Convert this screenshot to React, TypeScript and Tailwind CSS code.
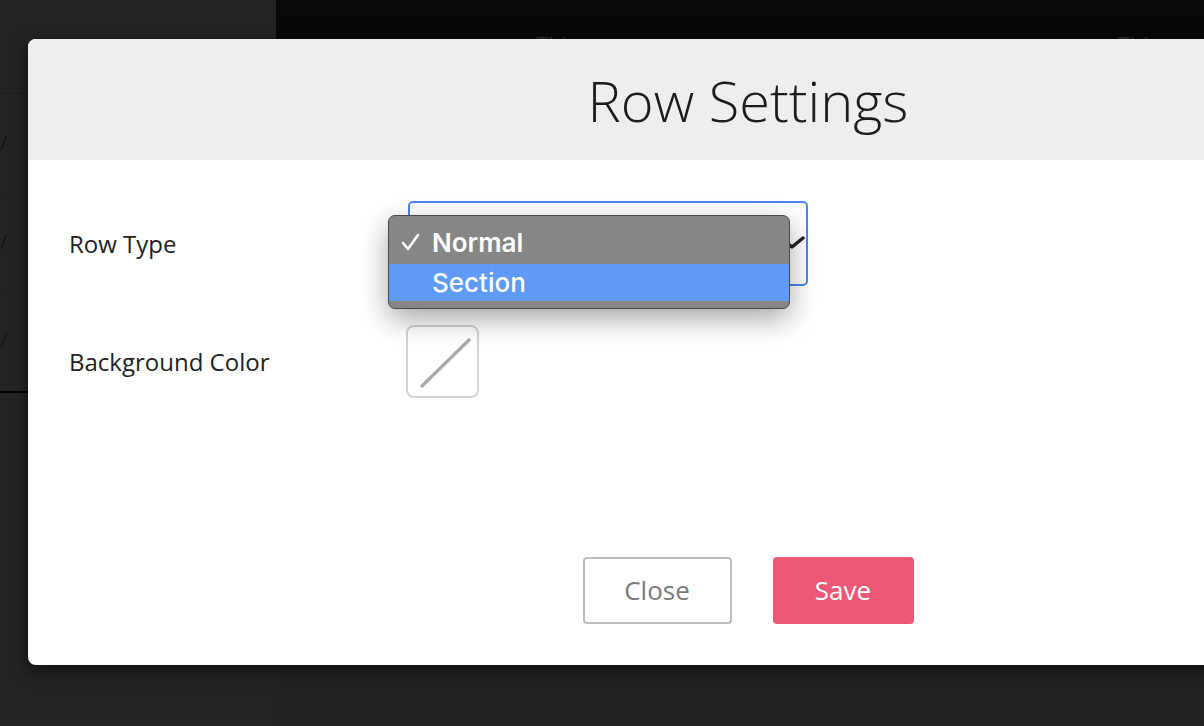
import React from "react";

const sans = { fontFamily: '"Open Sans", "Liberation Sans", sans-serif' };

function Sidebar() {
  return (
    <div className="flex w-[276px] shrink-0 flex-col bg-[#242424]">
      <div className="h-[94px] border-b border-[#1d1d1d]" />
      {[0, 1, 2].map((i) => (
        <div key={i} className="flex h-[99px] items-center border-b border-[#222] text-[20px] text-[#141414]" style={sans}>
          <span>/</span>
        </div>
      ))}
      <div className="h-[2px] bg-black" />
    </div>
  );
}

function TopBar() {
  return (
    <div className="flex h-[39px] items-end bg-[#080808] text-[22px] text-[#2c2c2c]" style={sans}>
      <span className="ml-[260px] translate-y-[22px]">Title</span>
      <span className="ml-[538px] translate-y-[22px]">Title</span>
    </div>
  );
}

function RowTypeSelect() {
  return (
    <div className="relative h-[85px] w-[400px] rounded-[5px] border-2 border-[#4d84f1] bg-white">
      <svg className="absolute left-[369px] top-[33px]" width="26" height="14" viewBox="0 0 26 14">
        <path d="M2 2 L13 11 L24 2" fill="none" stroke="#222" strokeWidth="3.5" strokeLinecap="round" strokeLinejoin="round" />
      </svg>
      {/* native popup menu */}
      <div className="absolute -left-[22px] top-[12px] w-[402px] overflow-hidden rounded-[7px] border border-[#4a4a4a] bg-[#868686] pt-[4px] pb-[7px] shadow-[0_10px_28px_rgba(0,0,0,0.35)]">
        <div className="flex h-[44px] items-center text-[26px] font-semibold text-white" style={{ fontFamily: "Inter, sans-serif" }}>
          <span className="flex w-[43px] justify-start pl-[12px]">
            <svg width="19" height="18" viewBox="0 0 19 18">
              <path d="M2 10 L7 16 L17 2" fill="none" stroke="#fff" strokeWidth="2.6" strokeLinecap="round" strokeLinejoin="round" />
            </svg>
          </span>
          <span>Normal</span>
        </div>
        <div className="flex h-[37px] items-center bg-[#5e9af6] pl-[43px] text-[26px] font-medium text-white" style={{ fontFamily: "Inter, sans-serif" }}>
          Section
        </div>
      </div>
    </div>
  );
}

function Swatch() {
  return (
    <div className="-ml-[2px] h-[73px] w-[73px] rounded-lg border-2 border-[#d3d3d3] bg-white">
      <svg width="69" height="69" viewBox="0 0 69 69">
        <line x1="13" y1="60" x2="62" y2="12" stroke="#a9a9a9" strokeWidth="3.2" />
      </svg>
    </div>
  );
}

function Modal() {
  return (
    <div className="absolute left-[28px] top-[39px] flex h-[626px] w-[1440px] flex-col overflow-hidden rounded-lg bg-white shadow-[0_6px_18px_rgba(0,0,0,0.55)]" style={sans}>
      <div className="flex h-[121px] items-center justify-center bg-[#eeeeee]">
        <h1 className="text-[56px] font-light text-[#1c1c1c]">Row Settings</h1>
      </div>
      <div className="flex flex-1 flex-col px-[41px] pt-[41px]">
        <div className="grid grid-cols-[339px_1fr] items-center gap-y-[39px] text-[24px] text-[#222]">
          <span>Row Type</span>
          <RowTypeSelect />
          <span>Background Color</span>
          <Swatch />
        </div>
        <div className="mt-[159px] flex justify-center gap-[41px] text-[26px]">
          <button className="h-[67px] w-[149px] rounded-[4px] border-2 border-[#bdbdbd] bg-white text-[#7a7a7a]">Close</button>
          <button className="h-[67px] w-[141px] rounded-[4px] bg-[#ec5876] text-white">Save</button>
        </div>
      </div>
    </div>
  );
}

export default function App() {
  return (
    <div className="relative flex h-[726px] w-[1204px] overflow-hidden bg-[#232323]">
      <Sidebar />
      <div className="flex flex-1 flex-col">
        <TopBar />
      </div>
      <Modal />
    </div>
  );
}
